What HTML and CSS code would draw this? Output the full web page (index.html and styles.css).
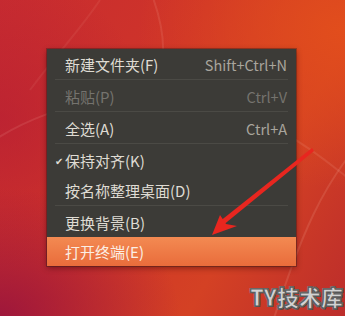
FILE: index.html
```html
<!DOCTYPE html>
<html lang="zh">
<head>
<meta charset="utf-8">
<title>Desktop menu</title>
<link rel="stylesheet" href="styles.css">
</head>
<body>
<div class="desktop">
  <svg class="wall" width="345" height="316" viewBox="0 0 345 316">
    <path d="M-20 150 C 60 90, 180 80, 260 120 S 360 200, 380 190" fill="none" stroke="rgba(255,200,180,0.12)" stroke-width="2"/>
    <path d="M150 -10 C 170 40, 165 70, 150 110" fill="none" stroke="rgba(255,200,180,0.12)" stroke-width="2"/>
    <path d="M380 120 C 320 180, 300 240, 270 330" fill="none" stroke="rgba(255,200,180,0.14)" stroke-width="2"/>
    <path d="M100 0 C 80 30, 60 50, 30 90" fill="none" stroke="rgba(255,200,180,0.08)" stroke-width="2"/>
  </svg>

  <div class="menu">
    <div class="item"><span class="label">新建文件夹(F)</span><span class="accel">Shift+Ctrl+N</span></div>
    <div class="sep"></div>
    <div class="item disabled"><span class="label">粘贴(P)</span><span class="accel">Ctrl+V</span></div>
    <div class="sep"></div>
    <div class="item"><span class="label">全选(A)</span><span class="accel">Ctrl+A</span></div>
    <div class="sep"></div>
    <div class="item"><span class="check">✔</span><span class="label">保持对齐(K)</span></div>
    <div class="item"><span class="label">按名称整理桌面(D)</span></div>
    <div class="sep"></div>
    <div class="item"><span class="label">更换背景(B)</span></div>
    <div class="item active"><span class="label">打开终端(E)</span></div>
  </div>

  <svg class="arrow" width="345" height="316" viewBox="0 0 345 316">
    <path d="M314 151 L 222 226 L 219 222 L 312 148 Z" fill="#e8261f"/>
    <path d="M212 235 L 220 215 L 226 224 L 237 226 Z" fill="#e8261f"/>
  </svg>

  <div class="mark">TY技术库</div>
</div>
</body>
</html>
```
FILE: styles.css
```css
html, body {
  margin: 0;
  padding: 0;
}
body {
  width: 345px;
  height: 316px;
  overflow: hidden;
  font-family: "Noto Sans CJK SC", "Noto Sans", sans-serif;
}
.desktop {
  position: relative;
  width: 345px;
  height: 316px;
  overflow: hidden;
  padding: 49px 0 0 47px;
  box-sizing: border-box;
  background:
    radial-gradient(ellipse 280px 220px at 340px 30px, rgba(226, 78, 28, 0.95), rgba(226, 78, 28, 0) 72%),
    radial-gradient(ellipse 240px 170px at 0px 316px, rgba(150, 18, 62, 0.85), rgba(150, 18, 62, 0) 75%),
    radial-gradient(ellipse 200px 200px at 0px 120px, rgba(180, 28, 52, 0.6), rgba(180, 28, 52, 0) 75%),
    linear-gradient(120deg, #c82c30 0%, #cf3429 40%, #d44124 70%, #bc2d2b 100%);
}
.wall {
  position: absolute;
  left: 0;
  top: 0;
}
.menu {
  position: relative;
  width: 249px;
  display: flex;
  flex-direction: column;
  background: #3c3b37;
  box-shadow: 0 0 0 1px rgba(40, 30, 30, 0.35), 0 2px 6px rgba(40, 0, 0, 0.45);
  color: #dfdbd3;
  font-size: 15px;
}
.item {
  height: 30px;
  display: flex;
  align-items: center;
  padding: 0 9px 0 18px;
  box-sizing: border-box;
}
.label {
  flex: 1;
  white-space: nowrap;
}
.accel {
  color: #a9a59d;
  font-size: 14.5px;
  white-space: nowrap;
}
.disabled .label,
.disabled .accel {
  color: #75736e;
}
.check {
  width: 10px;
  margin-left: -10px;
  font-size: 10px;
  color: #dfdbd3;
}
.sep {
  height: 1px;
  margin: 0 8px 1px;
  background: #4b4a45;
}
.item.active {
  height: 29px;
  background: linear-gradient(#f38a52, #e96c3b);
  color: #fbeee4;
}
.arrow {
  position: absolute;
  left: 0;
  top: 0;
}
.mark {
  position: absolute;
  left: 250px;
  top: 282px;
  font-size: 22px;
  font-weight: 900;
  color: #d2d2d2;
  letter-spacing: 0;
  -webkit-text-stroke: 1.2px #5e5e5e;
  text-shadow: 1px 1px 0 #4a4a4a, -1px -1px 0 #777, 1px -1px 0 #666, -1px 1px 0 #666;
  line-height: 28px;
}
```
